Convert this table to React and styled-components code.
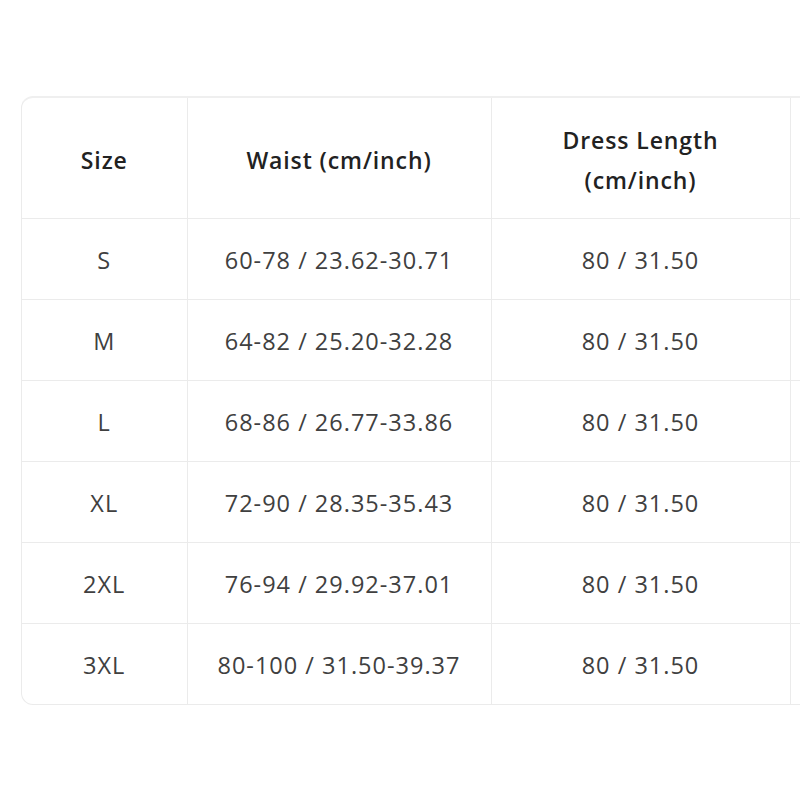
import React from "react";
import styled, { createGlobalStyle } from "styled-components";

const Global = createGlobalStyle`
  html, body { margin: 0; padding: 0; background: #fff; }
  body { overflow: hidden; font-family: "Open Sans", "Noto Sans", sans-serif; }
`;

const Page = styled.div`
  width: 800px;
  height: 800px;
  overflow: hidden;
  padding: 96px 0 0 21px;
  box-sizing: border-box;
`;

const Card = styled.div`
  width: 1100px;
  border: 1px solid #ebebeb;
  border-top: 2px solid #efefef;
  border-radius: 12px;
  overflow: hidden;
  background: #fff;
`;

const Table = styled.table`
  border-collapse: collapse;
  table-layout: fixed;
  width: 100%;
`;

const HeadCell = styled.th`
  width: ${(p) => p.$w}px;
  height: 120px;
  box-sizing: border-box;
  padding: 22px 12px 18px;
  font-size: 23px;
  font-weight: 600;
  letter-spacing: 0.9px;
  line-height: 40px;
  color: #222;
  text-align: center;
  border-right: 1px solid #ebebeb;
  border-bottom: 1px solid #ebebeb;
`;

const Cell = styled.td`
  height: ${(p) => (p.$last ? 80 : 81)}px;
  box-sizing: border-box;
  padding: 21px 12px 19px;
  font-size: 23.5px;
  letter-spacing: 1px;
  line-height: 40px;
  color: #404040;
  text-align: center;
  white-space: nowrap;
  border-right: 1px solid #ebebeb;
  border-bottom: ${(p) => (p.$last ? "none" : "1px solid #ebebeb")};
`;

const rows = [
  ["S", "60-78 / 23.62-30.71", "80 / 31.50"],
  ["M", "64-82 / 25.20-32.28", "80 / 31.50"],
  ["L", "68-86 / 26.77-33.86", "80 / 31.50"],
  ["XL", "72-90 / 28.35-35.43", "80 / 31.50"],
  ["2XL", "76-94 / 29.92-37.01", "80 / 31.50"],
  ["3XL", "80-100 / 31.50-39.37", "80 / 31.50"],
];

export default function App() {
  return (
    <>
      <Global />
      <Page>
        <Card>
          <Table>
            <thead>
              <tr>
                <HeadCell $w={165}>Size</HeadCell>
                <HeadCell $w={304}>Waist (cm/inch)</HeadCell>
                <HeadCell $w={299}>
                  Dress Length
                  <br />
                  (cm/inch)
                </HeadCell>
                <HeadCell $w={332} />
              </tr>
            </thead>
            <tbody>
              {rows.map((r, i) => {
                const last = i === rows.length - 1;
                return (
                  <tr key={r[0]}>
                    {r.map((c, j) => (
                      <Cell key={j} $last={last}>
                        {c}
                      </Cell>
                    ))}
                    <Cell $last={last} />
                  </tr>
                );
              })}
            </tbody>
          </Table>
        </Card>
      </Page>
    </>
  );
}
